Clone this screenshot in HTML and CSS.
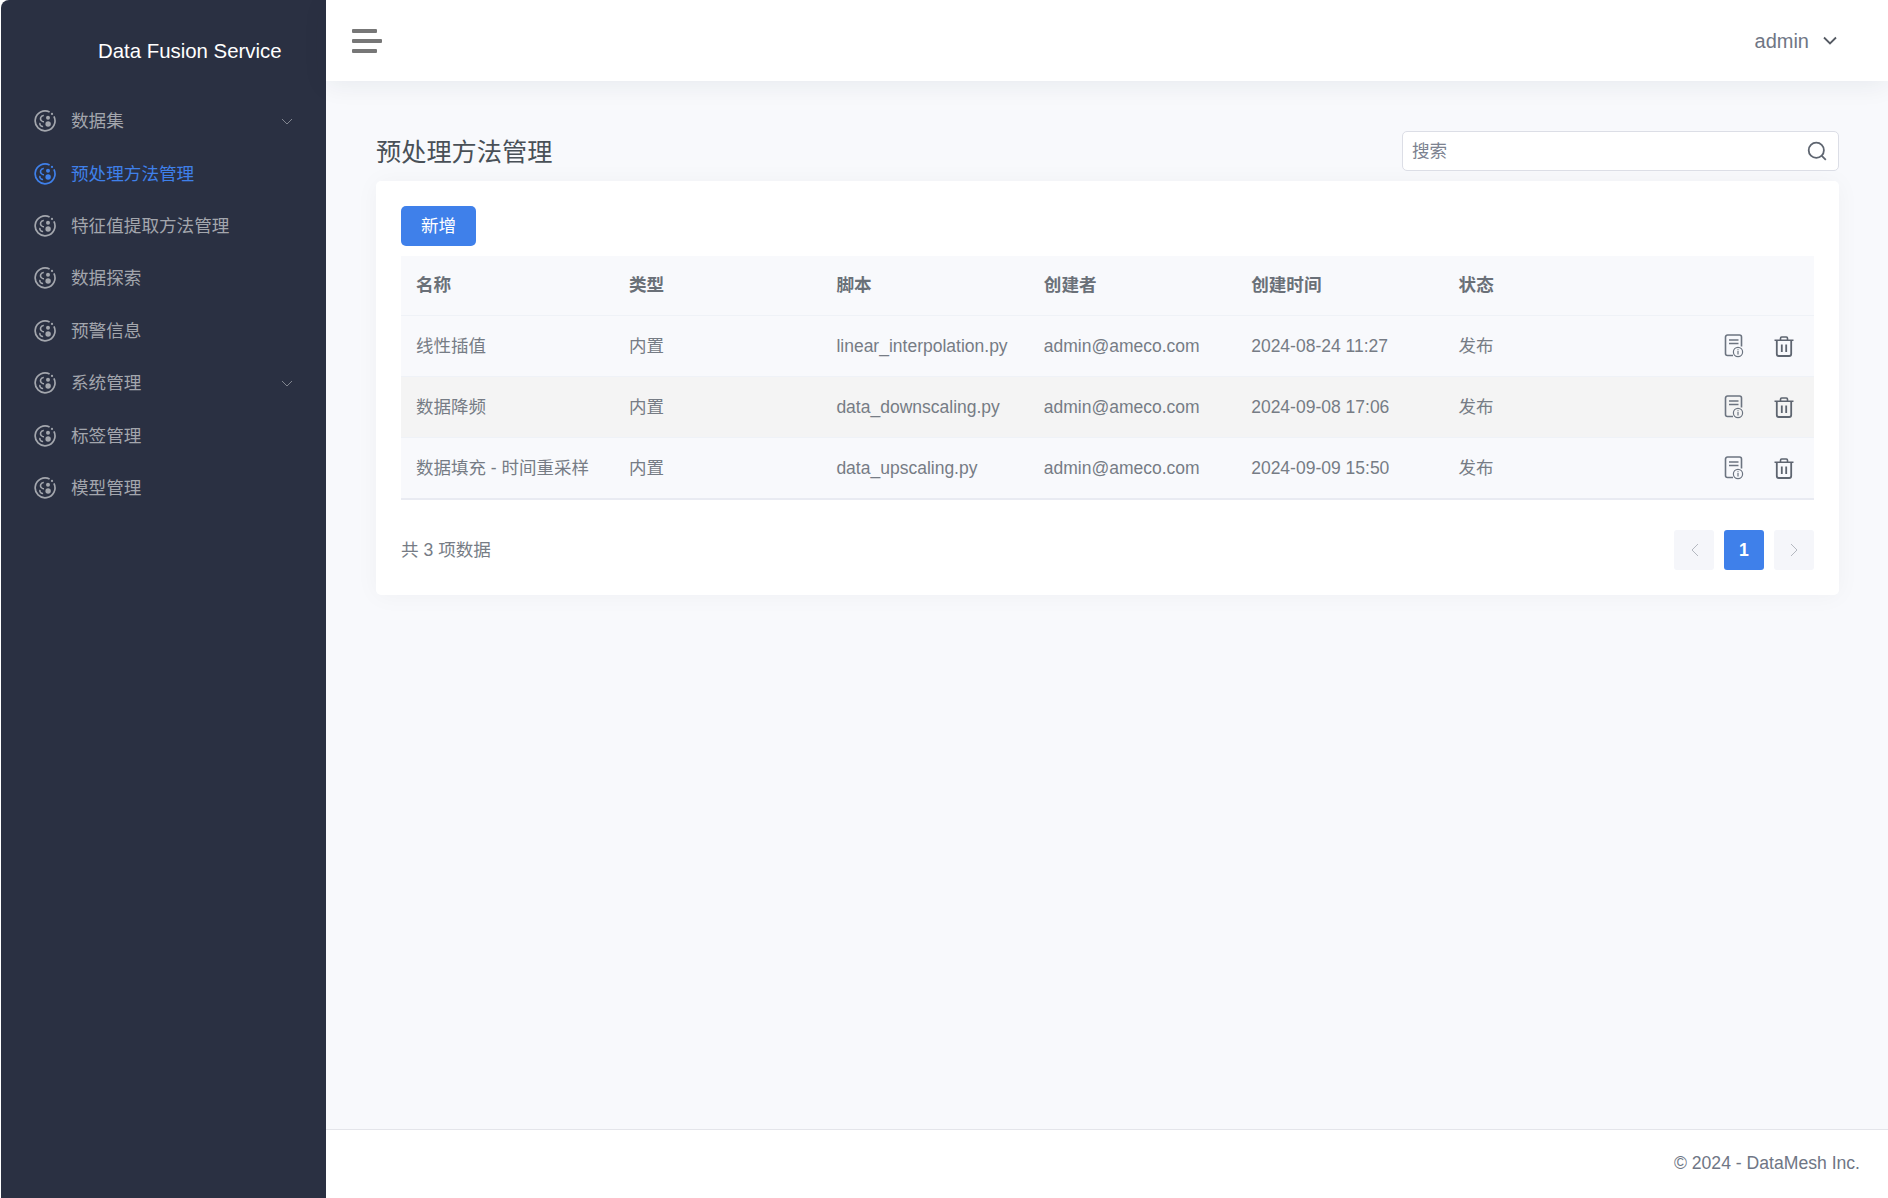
FILE: index.html
```html
<!DOCTYPE html>
<html lang="zh-CN">
<head>
    <meta charset="UTF-8">
    <title>预处理方法管理</title>
    <link rel="stylesheet" href="styles.css">
</head>
<body>
    <svg class="sprite" width="0" height="0">
        <symbol id="nav-icon" viewBox="0 0 22 22">
            <path d="M15.6 2.100A9.900 9.900 0 1 0 19.900 6.400" fill="none" stroke="currentColor" stroke-width="1.700"/>
            <circle cx="18" cy="3.900" r="1.100" fill="currentColor"/>
            <circle cx="14" cy="7.800" r="2" fill="currentColor"/>
            <circle cx="14.100" cy="14" r="2.700" fill="currentColor"/>
            <path d="M9.800 5.400a3.100 3.100 0 0 0-2 5.600c.7.500 1.400.7 2.200.7" fill="none" stroke="currentColor" stroke-width="1.500"/>
            <path d="M5.900 12.900a3 3 0 0 0 3.200 3.700" fill="none" stroke="currentColor" stroke-width="1.500"/>
        </symbol>
        <symbol id="chevron" viewBox="0 0 12 7">
            <path d="M1 1l5 5 5-5" fill="none" stroke="currentColor" stroke-width="1"/>
        </symbol>
        <symbol id="doc-icon" viewBox="0 0 20 24">
            <path d="M9 21.500H3.500A2 2 0 0 1 1.500 19.500V3A2 2 0 0 1 3.500 1H15.500A2 2 0 0 1 17.500 3V12.500" fill="none" stroke="currentColor" stroke-width="1.600"/>
            <path d="M5 6h9.500M5 9.500h9.500" fill="none" stroke="currentColor" stroke-width="1.500"/>
            <circle cx="14" cy="18" r="4.600" fill="none" stroke="currentColor" stroke-width="1.200"/>
            <path d="M14 17v3.500M14 15.300v.9" fill="none" stroke="currentColor" stroke-width="1.200"/>
        </symbol>
        <symbol id="trash-icon" viewBox="0 0 20 21">
            <path d="M.5 4.300h19M6.500 4V2.200A1.200 1.200 0 0 1 7.700 1h4.600a1.200 1.200 0 0 1 1.200 1.200V4" fill="none" stroke="currentColor" stroke-width="1.600"/>
            <path d="M2.800 4.500V18a2 2 0 0 0 2 2h10.400a2 2 0 0 0 2-2V4.500" fill="none" stroke="currentColor" stroke-width="1.800"/>
            <path d="M7.800 8.500v7.500M12.200 8.500v7.500" fill="none" stroke="currentColor" stroke-width="1.800"/>
        </symbol>
    </svg>

    <div class="layout">
        <aside class="sidebar">
            <div class="brand">Data Fusion Service</div>
            <nav class="menu">
                <a class="menu-item"><svg class="menu-icon"><use href="#nav-icon"/></svg>数据集<svg class="menu-arrow"><use href="#chevron"/></svg></a>
                <a class="menu-item active"><svg class="menu-icon"><use href="#nav-icon"/></svg>预处理方法管理</a>
                <a class="menu-item"><svg class="menu-icon"><use href="#nav-icon"/></svg>特征值提取方法管理</a>
                <a class="menu-item"><svg class="menu-icon"><use href="#nav-icon"/></svg>数据探索</a>
                <a class="menu-item"><svg class="menu-icon"><use href="#nav-icon"/></svg>预警信息</a>
                <a class="menu-item"><svg class="menu-icon"><use href="#nav-icon"/></svg>系统管理<svg class="menu-arrow"><use href="#chevron"/></svg></a>
                <a class="menu-item"><svg class="menu-icon"><use href="#nav-icon"/></svg>标签管理</a>
                <a class="menu-item"><svg class="menu-icon"><use href="#nav-icon"/></svg>模型管理</a>
            </nav>
        </aside>

        <div class="main">
            <header class="topbar">
                <div class="hamburger"><span></span><span></span><span></span></div>
                <div class="user">admin<svg class="user-arrow" viewBox="0 0 14 9"><path d="M1 1.500l6 6 6-6" fill="none" stroke="currentColor" stroke-width="1.800"/></svg></div>
            </header>

            <main class="content">
                <div class="page-head">
                    <h1 class="page-title">预处理方法管理</h1>
                    <div class="search">
                        <input class="search-input" type="text" placeholder="搜索">
                        <svg class="search-icon" viewBox="0 0 20 20"><circle cx="9.300" cy="9.300" r="7.600" fill="none" stroke="currentColor" stroke-width="1.800"/><path d="M14.800 14.800l4 4" fill="none" stroke="currentColor" stroke-width="1.800"/></svg>
                    </div>
                </div>

                <section class="card">
                    <button class="btn-add">新增</button>
                    <table class="data-table">
                        <thead>
                            <tr>
                                <th class="col-name">名称</th>
                                <th class="col">类型</th>
                                <th class="col">脚本</th>
                                <th class="col">创建者</th>
                                <th class="col">创建时间</th>
                                <th class="col">状态</th>
                                <th></th>
                            </tr>
                        </thead>
                        <tbody>
                            <tr>
                                <td>线性插值</td>
                                <td>内置</td>
                                <td>linear_interpolation.py</td>
                                <td>admin@ameco.com</td>
                                <td>2024-08-24 11:27</td>
                                <td>发布</td>
                                <td class="actions"><svg class="doc-icon"><use href="#doc-icon"/></svg><svg class="trash-icon"><use href="#trash-icon"/></svg></td>
                            </tr>
                            <tr class="hovered">
                                <td>数据降频</td>
                                <td>内置</td>
                                <td>data_downscaling.py</td>
                                <td>admin@ameco.com</td>
                                <td>2024-09-08 17:06</td>
                                <td>发布</td>
                                <td class="actions"><svg class="doc-icon"><use href="#doc-icon"/></svg><svg class="trash-icon"><use href="#trash-icon"/></svg></td>
                            </tr>
                            <tr>
                                <td>数据填充 - 时间重采样</td>
                                <td>内置</td>
                                <td>data_upscaling.py</td>
                                <td>admin@ameco.com</td>
                                <td>2024-09-09 15:50</td>
                                <td>发布</td>
                                <td class="actions"><svg class="doc-icon"><use href="#doc-icon"/></svg><svg class="trash-icon"><use href="#trash-icon"/></svg></td>
                            </tr>
                        </tbody>
                    </table>
                    <div class="table-foot">
                        <span class="total">共 3 项数据</span>
                        <div class="pager">
                            <span class="page-btn"><svg viewBox="0 0 9 14"><path d="M8 1L2 7l6 6" fill="none" stroke="currentColor" stroke-width="1"/></svg></span>
                            <span class="page-btn current">1</span>
                            <span class="page-btn"><svg viewBox="0 0 9 14"><path d="M1 1l6 6-6 6" fill="none" stroke="currentColor" stroke-width="1"/></svg></span>
                        </div>
                    </div>
                </section>
            </main>

            <footer class="footer">© 2024 - DataMesh Inc.</footer>
        </div>
    </div>
</body>
</html>
```

FILE: styles.css
```css
* {
    box-sizing: border-box;
}
html, body {
    height: 100%;
}
body {
    margin: 0;
    background-color: #fff;
    font-family: "Liberation Sans", "Noto Sans CJK SC", sans-serif;
    font-size: 17.6px;
    line-height: 24px;
    color: #767c85;
    overflow: hidden;
}
.sprite {
    position: absolute;
}
.layout {
    display: flex;
    height: 100%;
    padding-left: 1px;
}

/* sidebar */
.sidebar {
    width: 325px;
    flex-shrink: 0;
    background-color: #2a3042;
    border-top-left-radius: 8px;
}
.brand {
    height: 95px;
    padding: 39px 0 0 97px;
    font-size: 20.4px;
    color: #fff;
}
.menu-item {
    display: flex;
    align-items: center;
    height: 52.4px;
    padding-left: 33px;
    color: #a3a6ad;
}
.menu-item.active {
    color: #3f80ea;
}
.menu-icon {
    width: 22px;
    height: 22px;
    margin-right: 15px;
}
.menu-arrow {
    width: 12px;
    height: 7px;
    margin-left: auto;
    margin-right: 33px;
    color: #81858f;
}

/* topbar */
.main {
    flex: 1;
    min-width: 0;
    display: flex;
    flex-direction: column;
}
.topbar {
    height: 81px;
    flex-shrink: 0;
    display: flex;
    align-items: center;
    justify-content: space-between;
    padding: 0 51px 0 26px;
    background-color: #fff;
    box-shadow: 0 4px 24px rgba(18, 38, 63, 0.07);
    position: relative;
}
.hamburger {
    display: flex;
    flex-direction: column;
    gap: 6px;
    width: 30px;
}
.hamburger span {
    display: block;
    height: 4px;
    width: 25px;
    background-color: #777;
    border-radius: 1px;
}
.hamburger span:nth-child(2) {
    width: 30px;
}
.user {
    display: flex;
    align-items: center;
    font-size: 20px;
    color: #6f7685;
}
.user-arrow {
    width: 14px;
    height: 9px;
    margin-left: 14px;
    color: #555a63;
}

/* content */
.content {
    flex: 1;
    padding: 50px 49px 0 50px;
    background-color: #f8f9fc;
}
.page-head {
    display: flex;
    align-items: center;
    justify-content: space-between;
    height: 40px;
    margin-bottom: 10px;
}
.page-title {
    margin: 1px 0 0;
    font-size: 25.2px;
    font-weight: 400;
    color: #495057;
}
.search {
    position: relative;
    width: 437px;
}
.search-input {
    display: block;
    width: 100%;
    height: 40px;
    padding: 0 40px 0 9px;
    font-family: inherit;
    font-size: 17.6px;
    background-color: #fff;
    border: 1px solid #dcdee6;
    border-radius: 5px;
    outline: none;
}
.search-input::placeholder {
    color: #7c8290;
}
.search-icon {
    position: absolute;
    right: 12px;
    top: 10px;
    width: 20px;
    height: 20px;
    color: #5e6570;
}
.card {
    height: 414px;
    padding: 25px;
    background-color: #fff;
    border-radius: 5px;
    box-shadow: 0 1px 24px rgba(18, 38, 63, 0.04);
}
.btn-add {
    display: block;
    width: 75px;
    height: 40px;
    margin-bottom: 10px;
    padding: 0;
    font-family: inherit;
    font-size: 17.6px;
    line-height: 24px;
    color: #fff;
    background-color: #3f80ea;
    border: none;
    border-radius: 5px;
}

/* table */
.data-table {
    width: 100%;
    border-collapse: collapse;
    table-layout: fixed;
}
.data-table th {
    height: 59px;
    padding: 0 15px;
    text-align: left;
    font-weight: 700;
    color: #6a7078;
    background-color: #f8f9fc;
    border-bottom: 1px solid #eff2f7;
}
.data-table .col-name {
    width: 213px;
}
.data-table .col {
    width: 207.4px;
}
.data-table td {
    height: 61px;
    padding: 0 15px;
    font-size: 17.5px;
    white-space: nowrap;
    background-color: #f8f9fc;
    border-bottom: 1px solid #eff2f7;
}
.data-table tr.hovered td {
    background-color: #f4f4f4;
}
.data-table tbody tr:last-child td {
    height: 62px;
    border-bottom: 2px solid #e9ebf2;
}
.data-table td.actions {
    padding: 0 20px 0 0;
    text-align: right;
}
.doc-icon {
    width: 20px;
    height: 24px;
    color: #6c7480;
    vertical-align: middle;
}
.trash-icon {
    width: 20px;
    height: 21px;
    margin-left: 30px;
    color: #5e6570;
    vertical-align: middle;
}

/* pagination */
.table-foot {
    display: flex;
    align-items: center;
    justify-content: space-between;
    margin-top: 30px;
}
.pager {
    display: flex;
    gap: 10px;
}
.page-btn {
    display: flex;
    align-items: center;
    justify-content: center;
    width: 40px;
    height: 40px;
    color: #b4b8c0;
    background-color: #f5f6fa;
    border-radius: 3px;
}
.page-btn svg {
    width: 9px;
    height: 14px;
}
.page-btn.current {
    font-weight: 700;
    color: #fff;
    background-color: #3f80ea;
}
.footer {
    height: 69px;
    flex-shrink: 0;
    padding: 21px 28px 0 0;
    border-top: 1px solid #e4e5ea;
    background-color: #fff;
    text-align: right;
    color: #6f7685;
}
```
